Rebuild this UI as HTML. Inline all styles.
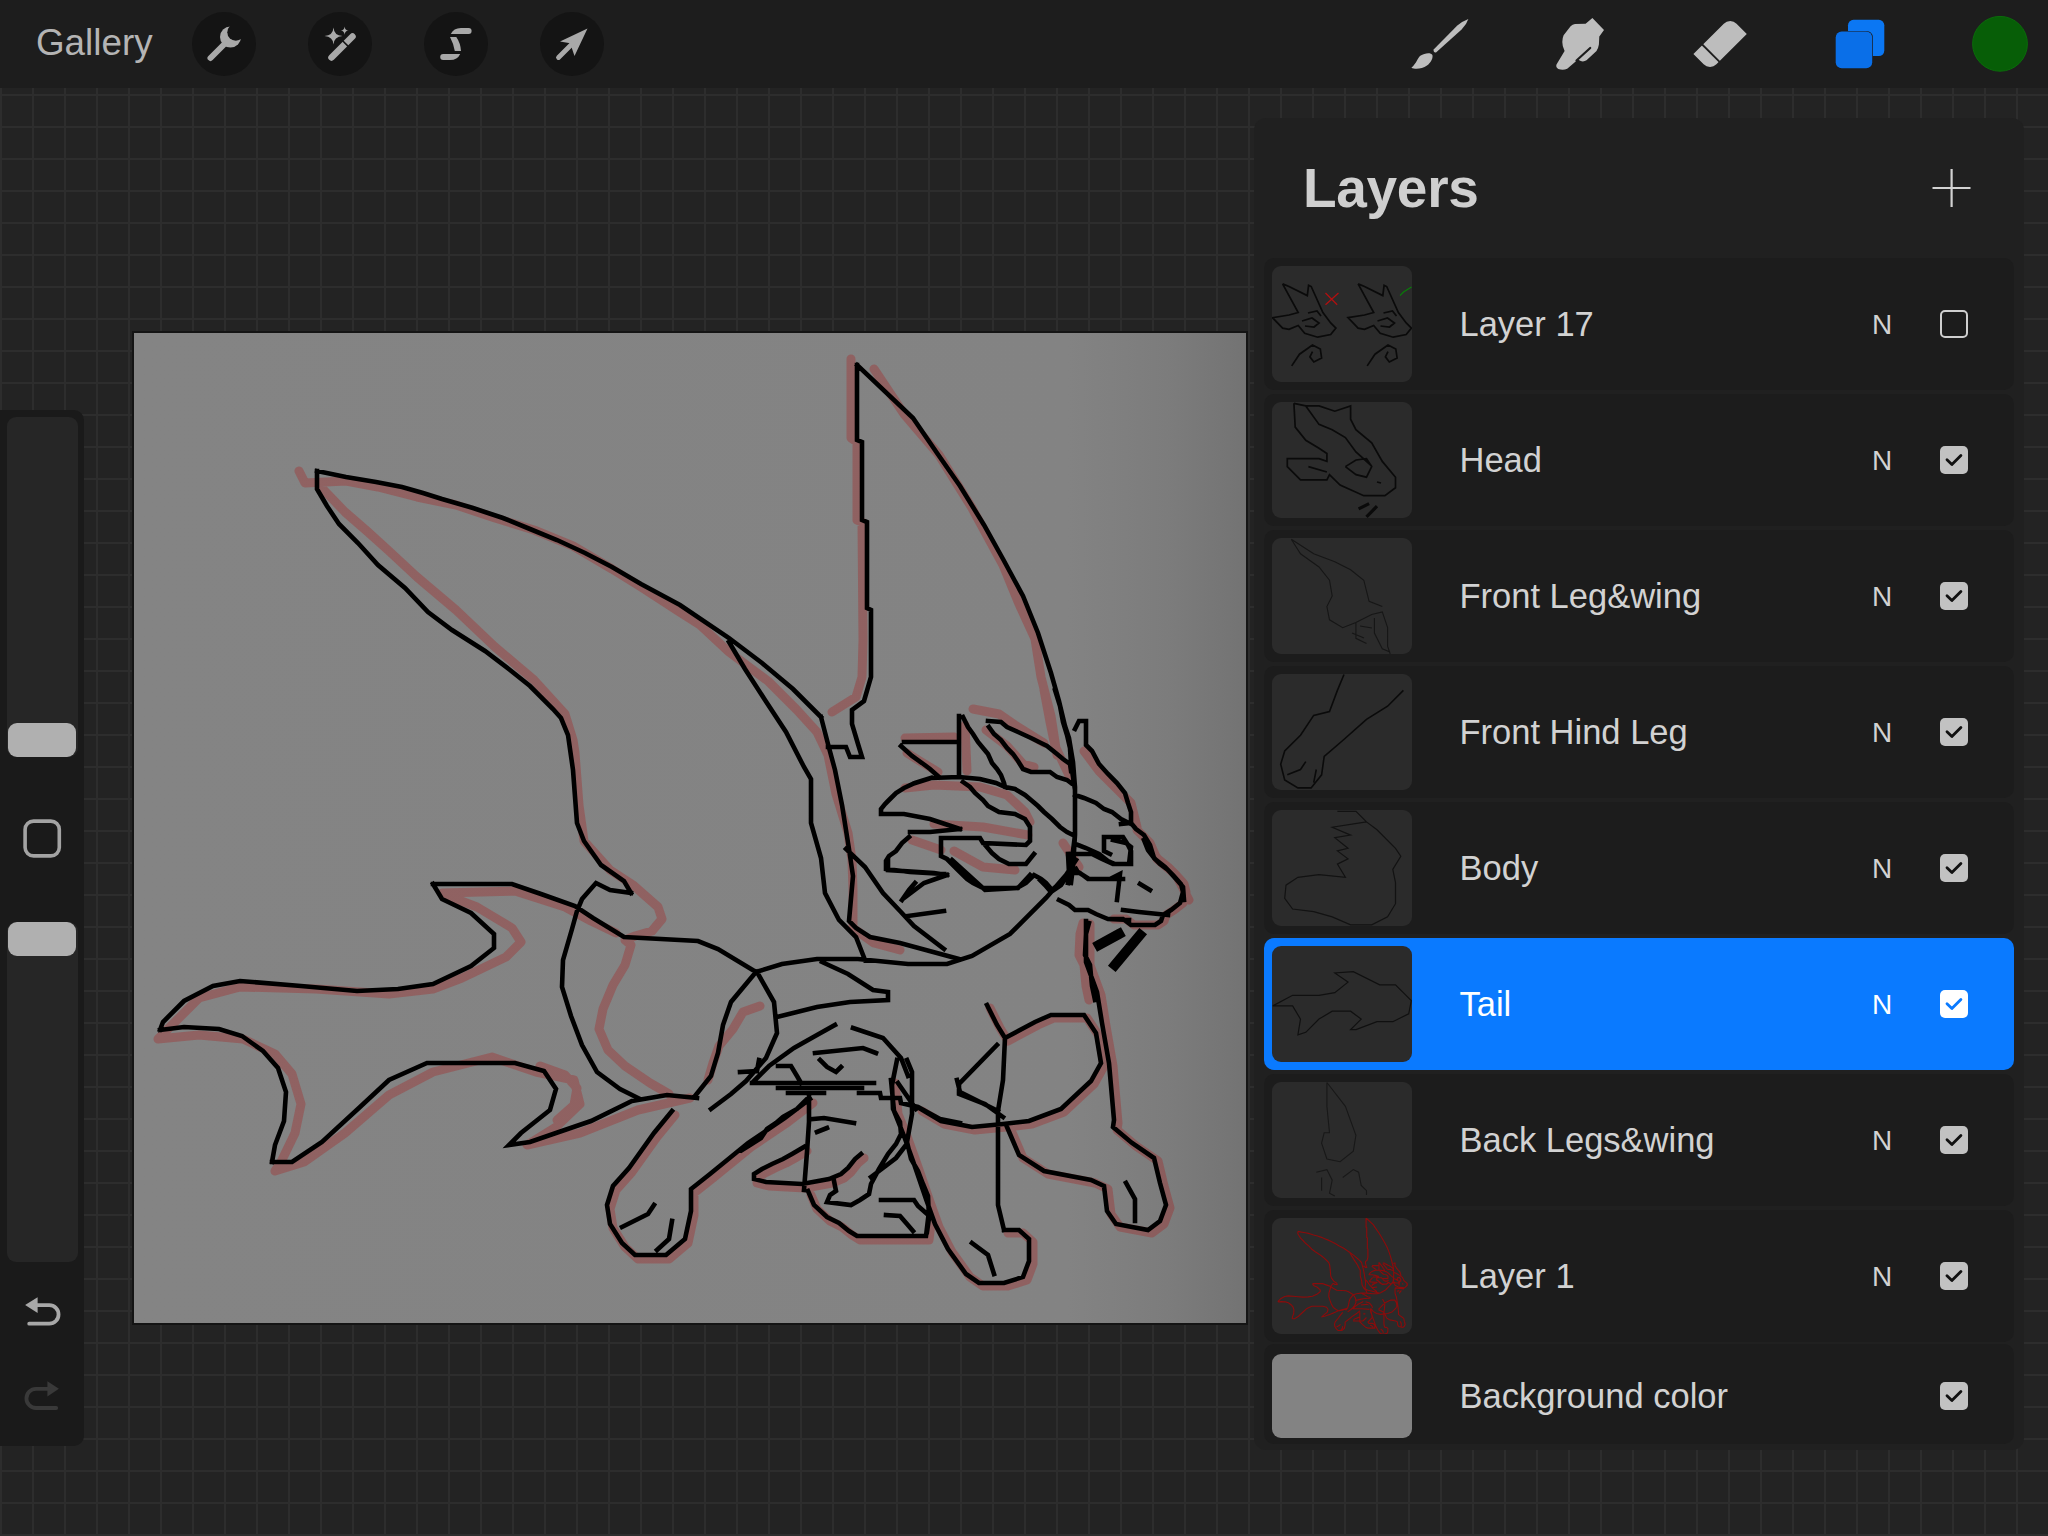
<!DOCTYPE html>
<html><head><meta charset="utf-8">
<style>
*{margin:0;padding:0;box-sizing:border-box}
html,body{width:2048px;height:1536px;overflow:hidden}
body{position:relative;font-family:"Liberation Sans",sans-serif;background-color:#232323;
background-image:linear-gradient(to right,#2d2d2d 0,#2d2d2d 2px,transparent 2px),linear-gradient(to bottom,#2d2d2d 0,#2d2d2d 2px,transparent 2px);
background-size:32px 32px;background-position:32px 94px}
.abs{position:absolute}
#top{left:0;top:0;width:2048px;height:88px;background:#1d1d1d}
#gallery{left:36px;top:22px;font-size:36.8px;color:#b4b4b4;line-height:42px;white-space:nowrap}
.tb{width:64px;height:64px;border-radius:50%;background:#141414;top:12px}
#side{left:0;top:410px;width:84px;height:1036px;background:#1a1a1a;border-radius:0 10px 10px 0}
.track{left:7px;width:71px;background:#262626;border-radius:9px}
.handle{left:8px;width:68px;height:34px;background:#b0b0b0;border-radius:9px}
#canvas{left:134px;top:333px;width:1112px;height:990px;background:linear-gradient(to right,#848484 0%,#838383 84%,#7c7c7c 93%,#737373 100%);box-shadow:0 0 0 2px #141414}
#panel{left:1254px;top:118px;width:770px;height:1332px;background:#202020;border-radius:12px}
#ltitle{left:1303px;top:155.5px;font-size:55px;font-weight:700;color:#cfcfcf;line-height:64px;letter-spacing:-0.3px}
.row{left:1264px;width:750px;height:132px;background:#1c1c1c;border-radius:10px}
.row.sel{background:#0a7aff}
.thumb{left:8px;top:8px;width:140px;height:116px;background:#2b2b2b;border-radius:9px;overflow:hidden}
.name{left:195.5px;top:47px;font-size:34.5px;color:#d2d2d2;line-height:38px;white-space:nowrap}
.bm{left:608px;top:51px;font-size:28px;color:#d2d2d2;line-height:32px}
.cb{left:676px;top:52px;width:28px;height:28px;border-radius:5px;background:#c2c2c2}
.cb.off{background:transparent;border:2.2px solid #cfcfcf}
.cb svg{position:absolute;left:0;top:0}
.sel .name,.sel .bm{color:#ffffff}
.sel .cb{background:#ffffff}
</style></head><body>
<div id="top" class="abs"></div>
<div id="gallery" class="abs">Gallery</div>
<div class="abs tb" style="left:192px"></div>
<div class="abs tb" style="left:308px"></div>
<div class="abs tb" style="left:424px"></div>
<div class="abs tb" style="left:540px"></div>
<svg class="abs" style="left:0;top:0" width="2048" height="88" viewBox="0 0 2048 88">
<defs><mask id="wm"><rect x="0" y="0" width="70" height="70" fill="#fff"/><circle cx="45.8" cy="22.2" r="8.5" fill="#000"/></mask></defs>
<g transform="translate(190,10)" fill="#a9a9a9" stroke="none">
<line x1="20.5" y1="48" x2="36" y2="32.5" stroke="#a9a9a9" stroke-width="6" stroke-linecap="round"/>
<circle cx="40.5" cy="27" r="10.5" mask="url(#wm)"/>
</g>
<g transform="translate(305,10)" fill="#a9a9a9">
<line x1="26.5" y1="47.5" x2="47.5" y2="26.5" stroke="#a9a9a9" stroke-width="6.5" stroke-linecap="round"/>
<line x1="37.6" y1="30.8" x2="43.2" y2="36.4" stroke="#141414" stroke-width="1.6"/>
<path d="M28.5,17.5 Q29,25.5 37.5,26 Q29,26.5 28.5,34.5 Q28,26.5 19.5,26 Q28,25.5 28.5,17.5 Z"/>
<path d="M39.6,16.5 Q39.9,20.3 43.6,20.6 Q39.9,20.9 39.6,24.7 Q39.3,20.9 35.6,20.6 Q39.3,20.3 39.6,16.5 Z"/>
</g>
<g transform="translate(421,10)" fill="#a9a9a9">
<path d="M29.8,24 Q32.5,18 40,18 L47.6,18 A3,3 0 0 1 47.6,24 Z"/>
<path d="M29,27 L35.3,27 Q39.5,33 40,41 L33.8,41 Q32.5,33.5 29,27 Z"/>
<path d="M39.2,44 Q36.5,50 29,50 L22.2,50 A3,3 0 0 1 22.2,44 Z"/>
</g>
<g transform="translate(537,10)" fill="#a9a9a9">
<path d="M50.5,18.5 L23,31.5 L33.2,33.2 L37.5,46 Z"/>
<line x1="21.5" y1="47.5" x2="36" y2="33" stroke="#a9a9a9" stroke-width="4.8" stroke-linecap="round"/>
</g>
<g transform="translate(1400,10)" fill="#bdbdbd">
<path d="M68.4,9 Q63,11 57.3,15.4 L33.4,39.8 Q33.6,43 36,42.4 L61.6,19.4 Q66.5,14.5 68.4,9 Z"/>
<path d="M32.4,45 C31,42.3 25,42.6 20.3,45.8 C17.4,48 17,53 11.4,57.7 C15,59.6 22,59 27,55.6 C31,52.6 33.2,48 32.4,45 Z"/>
</g>
<g transform="translate(1540,10)" fill="#bdbdbd">
<path d="M52.4,8 L64,20 L59.3,26.4 L58.9,34.6 Q58.3,38.5 56.5,41 L46.5,50.3 Q43.5,52.2 40.2,50.8 L38,49.5 L27.2,58.8 Q23,60.6 18.3,59 Q15.5,57.2 16.5,54.5 L24.6,41 Q22.2,36 22.3,31.9 Q22.4,28 23.6,25.3 L30.6,16.2 Q32.5,14.2 35,14 L45.6,13.7 Z"/>
<line x1="50.2" y1="38" x2="36.5" y2="50.5" stroke="#1d1d1d" stroke-width="2.2" stroke-linecap="round"/>
</g>
<g transform="translate(1720.1,44) rotate(-45)" fill="#bdbdbd">
<path d="M-26,-11.75 L17,-11.75 A9,9 0 0 1 26,-2.75 L26,11.75 L-17,11.75 A9,9 0 0 1 -26,2.75 Z"/>
<line x1="-13" y1="-13" x2="-13" y2="13" stroke="#1d1d1d" stroke-width="1.8"/>
</g>
<g transform="translate(1820,10)">
<rect x="28" y="9.8" width="36.3" height="36.2" rx="5.5" fill="#0b77f3"/>
<rect x="15" y="20.9" width="37.9" height="38.1" rx="6.5" fill="#1d1d1d"/>
<rect x="15.7" y="21.6" width="36.5" height="36.7" rx="6" fill="#0a6fe8"/>
</g>
<circle cx="2000" cy="43.8" r="27.4" fill="#075e07" stroke="#0a6c0a" stroke-width="1"/>
</svg>

<div id="side" class="abs">
  <div class="abs track" style="top:7px;height:340px"></div>
  <div class="abs handle" style="top:313px"></div>
  <div class="abs track" style="top:512px;height:340px"></div>
  <div class="abs handle" style="top:512px"></div>
</div>
<svg class="abs" style="left:0;top:780px" width="84" height="660" viewBox="0 780 84 660">
<rect x="25.1" y="821.1" width="34.2" height="34.8" rx="8.5" fill="none" stroke="#a3a3a3" stroke-width="3.6"/>
<path d="M25.1,1305 L37.6,1297.2 L37.6,1313 Z" fill="#a8a8a8"/>
<path d="M36,1305.2 L49.3,1305.2 A9.25,9.25 0 0 1 49.3,1323.7 L29.2,1323.7" fill="none" stroke="#a8a8a8" stroke-width="3.8" stroke-linecap="round"/>
<path d="M58.9,1388.8 L47.4,1381.2 L47.4,1396.6 Z" fill="#393939"/>
<path d="M48.5,1388.8 L36,1388.8 A9.6,9.6 0 0 0 36,1408 L56.2,1408" fill="none" stroke="#393939" stroke-width="3.8" stroke-linecap="round"/>
</svg>

<div id="canvas" class="abs"></div>
<!--CANVAS--><svg class="abs" style="left:134px;top:333px" width="1112" height="990" viewBox="0 0 1112 990"><path d="M165,138 L171,150 L212,148 L244,154 L283,164 L322,172 L361,185 L400,197 L439,213 L478,236 L507,254 L544,278 L566,292 L595,319 L634,348 L663,377 L683,399 L694,422 L702,461 L714,500 L718,527 L719,557 L719,595 L740,610 L766,617 M188,155 L211,179 L234,199 L255,218 L283,244 L322,277 L361,314 L400,347 L431,381 L439,407 L441,420 L445,472 L450,508 L476,537 L499,552 L524,574 L528,586 L518,598 L501,603 L491,607 L497,612 L491,632 L479,652 L469,676 L465,696 L474,717 L491,733 L516,750 L535,761 M717,26 L717,105 L723,109 L723,187 L728,189 L729,307 L728,344 L722,364 L698,379 M740,36 L770,81 L805,122 L838,175 L869,232 L885,271 L901,306 L907,344 L917,383 L923,422 M308,560 L381,558 L431,574 L457,588 L482,600 M314,563 L343,574 L378,595 L387,609 L372,624 L328,645 L299,656 L255,661 L182,656 L106,654 L65,665 L41,689 L24,706 M24,706 L65,702 L109,706 L141,721 L158,741 L167,771 L161,800 L147,829 L141,838 M141,838 L170,829 L211,800 L255,762 L299,739 L358,724 L402,739 L440,747 L446,771 L422,794 L393,812 L446,800 L504,777 L556,765 M406,733 L431,742 L443,755 L440,772 L423,787 M626,673 L609,679 L599,696 L585,713 L579,730 L574,747 M839,376 L865,381 L881,392 L897,402 L910,410 M910,357 L916,389 L921,413 L933,438 L937,447 M771,405 L820,404 M773,420 L789,430 L804,439 M831,392 L833,438 M852,397 L873,413 L889,431 L900,434 M771,455 L800,452 L846,454 L873,462 L891,479 L896,489 M800,491 L849,494 L894,502 M778,507 L807,517 M820,518 L849,534 L881,537 M950,418 L965,438 L984,457 L997,470 L1003,494 M1003,497 L1016,510 L1023,526 L1042,542 L1055,567 M929,510 L945,534 M788,778 L810,791 L841,797 L872,794 L898,791 L930,779 L960,751 L970,733 L965,703 L953,685 L920,685 L904,692 L874,708 L866,695 L856,675 M956,591 L956,632 L967,662 L972,693 L979,733 L984,790 L983,797 L1002,813 L1024,828 L1030,853 L1036,875 L1030,891 L1018,900 L986,894 L977,881 L974,856 L961,850 L914,841 L889,825 L877,797 M541,782 L523,804 L498,839 L482,857 L476,876 L479,895 L491,914 L504,926 L535,926 L554,910 L560,882 L560,860 L579,845 L617,814 L654,789 L679,770 M673,818 L661,825 L652,830 L641,835 L631,840 L623,845 L623,850 L635,853 L671,855 L698,850 L710,845 L717,839 L724,830 L730,825 M677,862 L683,876 L696,888 L708,894 L718,902 L726,907 L795,907 L798,882 M761,750 L764,781 L774,806 L783,831 L796,869 L805,894 L818,919 L836,944 L849,953 L874,953 L893,947 L899,931 L899,909 L889,900 L874,900 M1013,507 L1017,517 L1024,526 L1034,534 L1042,542 L1050,551 L1052,559 L1049,570 L1040,577 L1032,582 L1030,588 L1024,592 L1000,592 L992,586 L980,586 M949,590 L946,601 L945,622 L950,632 L952,653 L955,667" fill="none" stroke="#b00808" stroke-opacity="0.27" stroke-width="9" stroke-linejoin="round" stroke-linecap="round"/><path d="M183,138 L212,144 L242,149 L268,154 L289,160 L308,166 L339,175 L369,185 L396,196 L423,207 L451,220 L478,234 L507,251 L546,272 L595,305 L628,330 L659,356 L687,384 M687,384 L694,411 L701,437 L708,472 L715,516 L719,543 L715,588 L722,595 L736,604 L766,610 L825,626 M183,138 L183,156 L193,173 L205,191 L224,210 L244,232 L271,255 L294,279 L318,297 L351,318 L376,337 L396,353 L419,376 L427,385 L434,402 L439,437 L443,490 L450,508 L467,532 L490,548 L497,560 M723,32 L723,107 L728,109 L728,187 L733,189 L733,275 L737,277 L737,344 L730,368 L718,377 L718,391 L724,411 L728,424 L716,424 L712,414 L694,414 M723,32 L779,85 L803,120 L826,153 L850,192 L869,226 L889,263 L904,300 L917,340 L925,368 L931,393 L935,405 L939,429 L941,454 L941,502 L939,534 L937,550 M595,309 L611,336 L631,367 L652,399 L670,434 L677,446 L677,490 L687,525 L691,560 L705,587 L722,604 L731,627 M712,516 L731,534 L749,560 L766,578 L780,593 L810,616 M299,551 L378,551 L407,561 L441,573 L459,585 L490,604 L564,608 L584,616 L622,639 M299,551 L308,566 L337,580 L360,601 L360,615 L337,633 L299,651 L264,656 L223,658 L167,653 L106,648 L79,653 L50,668 L29,689 L26,697 M26,697 L50,694 L85,696 L108,703 L129,718 L144,735 L152,759 L150,788 L141,812 L138,829 M138,829 L158,829 L188,809 L226,774 L255,747 L293,730 L381,730 L410,738 L422,756 L416,777 L387,800 L375,812 L396,809 L422,800 L457,788 L498,768 L533,762 L563,765 M497,560 L476,557 L462,550 L448,566 L443,578 L438,596 L429,627 L428,654 L437,683 L448,712 L463,739 L486,756 L504,765 M622,639 L597,669 L589,692 L584,720 L577,743 L561,763 M623,639 L640,669 L643,700 L632,725 L612,748 L597,761 L577,776 M622,639 L648,631 L683,626 L724,626 L774,631 L813,631 L838,623 L876,601 L912,565 L932,542 L942,527 M643,684 L683,674 L716,669 L754,667 L754,659 L739,657 L714,641 L688,629 M785,775 L807,788 L838,794 L869,791 L895,788 L927,776 L957,748 L967,730 L962,700 L950,682 L917,682 L901,689 L871,705 L863,692 L853,672 M871,705 L869,747 L864,778 L864,872 L870,897 M863,712 L825,751 L825,761 L851,771 L869,784 M952,588 L952,629 L963,659 L968,690 L975,730 L980,787 L979,794 L998,810 L1020,825 L1026,850 L1032,872 L1026,888 L1014,897 L982,891 L973,878 L970,853 L957,847 L910,838 L885,822 L873,794 M992,850 L1001,866 L1001,888 M538,778 L520,800 L495,835 L479,853 L473,872 L476,891 L488,910 L501,922 L532,922 L551,906 L557,878 L557,856 L576,841 L614,810 L651,785 L676,766 M520,872 L514,881 L488,894 M538,888 L535,906 L523,917 M618,750 L740,750 M644,755 L728,755 M654,760 L690,760 M725,760 L746,760 L747,765 L766,765 L767,770 L784,774 L795,780 L806,786 L826,790 M606,739 L623,738 L625,727 M644,733 L657,733 L663,743 L667,750 M686,727 L693,734 L702,739 L707,734 M675,764 L663,776 L649,784 L642,790 L633,796 L627,805 L616,812 L608,817 M679,786 L690,785 L720,790 M675,764 L675,789 L673,819 L670,857 M683,799 L693,795 M670,814 L658,821 L649,826 L638,831 L628,836 L620,841 L620,846 L632,849 L668,851 L695,846 L707,841 L714,835 L721,826 L727,821 M700,848 L702,858 L696,862 L693,869 L717,872 L726,867 L735,861 L737,851 L745,836 L754,821 L762,811 L767,801 L766,789 L759,776 L758,752 L763,727 M737,844 L749,835 L762,825 L772,812 M674,858 L680,872 L693,884 L705,890 L715,898 L723,903 L792,903 L795,878 M747,867 L780,867 L784,873 L792,880 M752,882 L766,883 L773,891 L779,898 M773,727 L778,739 L778,781 L773,809 L777,826 L784,838 L789,851 L794,863 L795,885 L793,899 M757,747 L760,778 L770,803 L779,828 L792,866 L801,891 L814,916 L832,941 L845,950 L870,950 L889,944 L895,928 L895,906 L885,897 L870,897 M838,910 L854,922 L860,941 M823,747 L826,759 L864,778 M770,409 L825,409 M767,413 L778,423 L788,430 L796,436 L805,444 M825,383 L825,442 M829,384 L834,394 L839,401 L844,409 L849,415 L854,421 L858,430 L863,436 L867,442 L870,450 L871,454 L881,456 L891,462 L897,467 L904,473 L910,479 L918,486 L926,494 L933,499 L939,502 M854,388 L867,389 L873,394 L884,399 L897,405 L907,410 L913,413 L923,421 L929,426 L936,431 L937,438 M855,394 L860,401 L867,407 L873,415 L879,421 L884,428 L889,436 L897,439 L916,439 L923,444 L933,447 L937,450 M921,357 L926,373 L929,389 L933,402 L936,415 L937,431 L939,444 L941,457 L941,470 L941,502 L939,518 L937,534 L934,550 M941,396 L945,388 L952,388 L952,412 L958,418 L965,431 L974,441 L983,450 L991,460 L994,470 L997,479 L997,490 L987,491 M997,490 L1002,496 L1010,502 L1016,512 L1020,525 L1026,531 L1034,537 L1042,546 L1049,554 L1050,567 M941,462 L950,465 L962,470 L970,476 L978,479 L987,486 L997,491 M781,450 L797,445 L825,444 L846,446 L862,450 L871,454 M797,445 L781,450 L770,455 L762,460 L755,467 L751,471 L747,476 L747,481 L770,481 L796,486 L826,496 M776,499 L796,499 L826,496 M807,505 L846,505 L849,510 L892,512 L896,508 L896,494 L891,486 L881,481 L865,479 L854,473 L849,467 L841,460 L836,454 L829,449 M852,513 L858,520 L865,526 L875,531 L892,531 L900,521 M775,504 L768,510 L762,518 L755,523 L752,528 L752,536 L776,539 L810,541 M807,505 L807,523 L813,526 L823,536 L833,546 L839,550 L849,555 L883,555 L892,550 L900,542 L907,546 L912,550 L918,557 L926,550 L933,544 L937,539 L942,536 M781,550 L775,557 L768,567 M970,504 L989,504 L994,512 L997,518 L997,531 L981,531 L974,528 L965,521 L952,515 L944,512 M970,504 L970,518 L976,521 M944,539 L955,546 L976,546 L986,541 L983,567 M754,527 L754,537 L800,540 L813,542 M770,565 L790,550 L813,542 M774,583 L810,578 M818,527 L851,557 L884,555 L896,542 M701,692 L683,702 L660,715 L635,733 L620,748 M719,695 L749,705 L767,725 L774,743 M681,720 L729,715 L742,720 M764,750 L782,776 M1010,507 L1014,517 L1021,526 L1031,534 L1039,542 L1047,551 L1049,559 L1046,570 L1037,577 L1029,582 L1027,588 L1021,592 L997,592 L989,586 L977,586 M1006,551 L1016,557 M925,567 L935,572 L941,577 L954,577 L962,581 L974,586 L995,587 M989,577 L1005,579 L1034,582 M934,521 L958,521 L968,526 L979,531 L995,531 L997,514 L992,510 L979,507 M934,521 L935,540 L946,540 L954,546 L989,546 M906,547 L911,552 L917,559 L927,552 L931,546 M955,590 L952,601 L951,622 L956,632 L958,653 L961,667" fill="none" stroke="#000" stroke-width="4.6" stroke-linejoin="miter" stroke-linecap="square"/><path d="M965,612 L985,601 M981,632 L1006,602" stroke="#000" stroke-width="10" stroke-linecap="square"/></svg><!--/CANVAS-->

<div id="panel" class="abs"></div>
<div id="ltitle" class="abs">Layers</div>
<svg class="abs" style="left:1931px;top:168px" width="42" height="42" viewBox="0 0 42 42"><path d="M20.6,1 L20.6,39 M1.5,20 L39.5,20" stroke="#d2d2d2" stroke-width="2.2"/></svg>

<div class="abs row" style="top:258px"><div class="abs thumb"><svg width="140" height="116" viewBox="0 0 140 116"><!--Tl17--><path d="M10.6,17.9 L17,20.5 L35.3,29.6 L36.6,19.2 L39.2,20.5 L50.9,46.5 L58.7,56.9 L63.9,62.1 L58.7,68.6 L45.7,71.2 L32.7,67.3 L26.2,59.5 L17,63.4 L10.6,62.1 L0.5,51.7 L17,49 L26.2,46.5 L10.6,17.9 M30,55 L40,52 L47,57 L42,61 L33,60 M36,47 L45,45 L49,50 M19.7,99.9 L27.5,88.2 L40.5,79 L48.3,83 L49.6,92 L41.8,96 L37.9,90.8 L40.5,85.6 M86.1,17.9 L92.5,20.5 L110.8,29.6 L112.1,19.2 L114.7,20.5 L126.4,46.5 L134.2,56.9 L139.4,62.1 L134.2,68.6 L121.2,71.2 L108.2,67.3 L101.7,59.5 L92.5,63.4 L86.1,62.1 L76.0,51.7 L92.5,49 L101.7,46.5 L86.1,17.9 M105.5,55 L115.5,52 L122.5,57 L117.5,61 L108.5,60 M111.5,47 L120.5,45 L124.5,50 M95.2,99.9 L103.0,88.2 L116.0,79 L123.8,83 L125.1,92 L117.3,96 L113.4,90.8 L116.0,85.6" fill="none" stroke="#0a0a0a" stroke-width="1.7"/><path d="M53.5,27 L65.2,38.7 M53.5,38.7 L66.5,27" stroke="#b01010" stroke-width="1.3"/><path d="M128,29.6 L131.5,26 L139.5,21" stroke="#0a7a0a" stroke-width="1.3" fill="none"/><!--/Tl17--></svg></div><div class="abs name">Layer 17</div><div class="abs bm">N</div><div class="abs cb off"></div></div>
<div class="abs row" style="top:394px"><div class="abs thumb"><svg width="140" height="116" viewBox="0 0 140 116"><!--Thead--><path d="M21.9,1.3 L23.2,25.1 L33.8,38.3 L47,46.2 L54.9,51.5 L54.9,59.4 L47,56.7 L15.3,56.7 L15.3,64.6 L28.5,77.8 L54.9,77.8 L57.5,72.6 L68.1,83.1 L91.8,93.7 L112.9,93.7 L123.5,85.8 L123.5,75.2 L110.3,59.4 L99.7,40.9 L83.9,27.7 L78.6,17.2 L78.6,3.9 L62.8,9.2 L47,3.9 L33.8,3.9 L21.9,1.3 M33.8,3.9 L47,22.4 L60.2,27.7 L73.4,35.6 L83.9,50 L99.7,64 M73.4,64.6 L84,72.6 L94.5,75.2 L99.7,64.6 L94.5,56.7 L84,58 L73.4,64.6 M36.4,64.6 L54.9,70 M105,80 L109,81" fill="none" stroke="#0a0a0a" stroke-width="1.7"/><path d="M86.6,106.9 L97.1,101.6 M94.5,114.8 L105,104.2" stroke="#0a0a0a" stroke-width="3.2"/><!--/Thead--></svg></div><div class="abs name">Head</div><div class="abs bm">N</div><div class="abs cb"><svg width="28" height="28" viewBox="0 0 28 28"><path d="M7,13.8 L11.9,18.6 L20.9,9.5" fill="none" stroke="#111" stroke-width="2.8" stroke-linecap="round" stroke-linejoin="round"/></svg></div></div>
<div class="abs row" style="top:530px"><div class="abs thumb"><svg width="140" height="116" viewBox="0 0 140 116"><!--Tflw--><path d="M19.3,1.3 L41.7,15.8 L62.8,23.7 L78.6,31.7 L91.8,42.2 L97.1,63.3 L110.3,68.6 M19.3,1.3 L28.5,15.8 L47,29 L57.5,42.2 L60.2,58 L54.9,68.6 L57.5,81.8 L70.7,89.7 L83.9,84.4 L99.7,76.5 L110.3,73.9 L115.6,89.7 L115.6,108.2 L118.2,116 M102.4,80 L102.4,95 L110.3,110.8 L118,114 M83.9,84.4 L83.9,100.3 L94.5,105.5 M88,88 L100,90 M80,95 L92,100" fill="none" stroke="#161616" stroke-width="1.1"/><!--/Tflw--></svg></div><div class="abs name">Front Leg&amp;wing</div><div class="abs bm">N</div><div class="abs cb"><svg width="28" height="28" viewBox="0 0 28 28"><path d="M7,13.8 L11.9,18.6 L20.9,9.5" fill="none" stroke="#111" stroke-width="2.8" stroke-linecap="round" stroke-linejoin="round"/></svg></div></div>
<div class="abs row" style="top:666px"><div class="abs thumb"><svg width="140" height="116" viewBox="0 0 140 116"><!--Tfhl--><path d="M72,0.5 L65.4,16.4 L57.5,37.5 L41.7,41.4 L28.5,61.2 L12.7,77 L8.7,90.2 L12.7,106 L25.9,113.9 L39.1,113.9 L49.6,100.8 L52.2,82.3 L70.7,66.5 L94.5,45.4 L115.6,32.2 L131.4,16.4 M33.8,87.6 L28.5,95.5 L15.3,100.8 M44.3,95.5 L41.7,108.7" fill="none" stroke="#0a0a0a" stroke-width="1.6"/><!--/Tfhl--></svg></div><div class="abs name">Front Hind Leg</div><div class="abs bm">N</div><div class="abs cb"><svg width="28" height="28" viewBox="0 0 28 28"><path d="M7,13.8 L11.9,18.6 L20.9,9.5" fill="none" stroke="#111" stroke-width="2.8" stroke-linecap="round" stroke-linejoin="round"/></svg></div></div>
<div class="abs row" style="top:802px"><div class="abs thumb"><svg width="140" height="116" viewBox="0 0 140 116"><!--Tbody--><path d="M65.4,1.3 L84,1.3 L94.5,11.9 L105,19.8 L123.5,38.3 L128.8,46.2 L120.8,59.4 L123.5,72.6 L123.5,93.7 L115.6,106.9 L99.7,114.8 L78.6,114.8 L60.2,106.9 L41.7,101.6 L20.6,99 L12.7,88.4 L14,75.2 L25.9,67.3 L47,64.6 L73.4,67.3 L65.4,54.1 L76,48.8 L65.4,40.9 L76,38.3 L62.8,27.7 L78.6,25.1 L60.2,17.2 L94.5,11.9" fill="none" stroke="#121212" stroke-width="1.2"/><!--/Tbody--></svg></div><div class="abs name">Body</div><div class="abs bm">N</div><div class="abs cb"><svg width="28" height="28" viewBox="0 0 28 28"><path d="M7,13.8 L11.9,18.6 L20.9,9.5" fill="none" stroke="#111" stroke-width="2.8" stroke-linecap="round" stroke-linejoin="round"/></svg></div></div>
<div class="abs row sel" style="top:938px"><div class="abs thumb"><svg width="140" height="116" viewBox="0 0 140 116"><!--Ttail--><path d="M0.8,59.9 L20.6,49.3 L47,49.3 L62.8,46.7 L76,36.1 L62.8,26.9 L81.3,25.6 L107.7,38.8 L123.5,38.8 L139.3,54.6 L136.7,67.8 L120.8,75.7 L105,75.7 L84,83.6 L78.6,83.6 L89.2,73.1 L78.6,65.2 L60.2,65.2 L47,73.1 L33.8,86.3 L25.9,88.9 L28.5,73.1 L20.6,59.9 L0.8,59.9" fill="none" stroke="#101010" stroke-width="1.2"/><!--/Ttail--></svg></div><div class="abs name">Tail</div><div class="abs bm">N</div><div class="abs cb"><svg width="28" height="28" viewBox="0 0 28 28"><path d="M7,13.8 L11.9,18.6 L20.9,9.5" fill="none" stroke="#0a7aff" stroke-width="2.8" stroke-linecap="round" stroke-linejoin="round"/></svg></div></div>
<div class="abs row" style="top:1074px"><div class="abs thumb"><svg width="140" height="116" viewBox="0 0 140 116"><!--Tblw--><path d="M54.9,0.5 L73.4,24.3 L83.9,53.3 L81.3,69.1 L68.1,79.7 L54.9,77 L49.6,61.2 L52.2,50.7 L57.5,50.7 L54.9,24.3 L54.9,0.5 M44.3,90.2 L54.9,87.6 L60.2,98.2 L57.5,111.3 L62.8,113.9 M49.6,95.5 L49.6,108.7 M70.7,95.5 L81.3,87.6 L86.6,90.2 L89.2,103.4 L94.5,108.7 L94.5,113" fill="none" stroke="#181818" stroke-width="1.1"/><!--/Tblw--></svg></div><div class="abs name">Back Legs&amp;wing</div><div class="abs bm">N</div><div class="abs cb"><svg width="28" height="28" viewBox="0 0 28 28"><path d="M7,13.8 L11.9,18.6 L20.9,9.5" fill="none" stroke="#111" stroke-width="2.8" stroke-linecap="round" stroke-linejoin="round"/></svg></div></div>
<div class="abs row" style="top:1210px"><div class="abs thumb"><svg width="140" height="116" viewBox="0 0 140 116"><!--Tl1--><g transform="translate(6,0) scale(0.1264) translate(-160,-365)"><path d="M317,471 L346,477 L376,482 L402,487 L423,493 L442,499 L473,508 L503,518 L530,529 L557,540 L585,553 L612,567 L641,584 L680,605 L729,638 L762,663 L793,689 L821,717 M821,717 L828,744 L835,770 L842,805 L849,849 L853,876 L849,921 L856,928 L870,937 L900,943 L959,959 M317,471 L317,489 L327,506 L339,524 L358,543 L378,565 L405,588 L428,612 L452,630 L485,651 L510,670 L530,686 L553,709 L561,718 L568,735 L573,770 L577,823 L584,841 L601,865 L624,881 L631,893 M857,365 L857,440 L862,442 L862,520 L867,522 L867,608 L871,610 L871,677 L864,701 L852,710 L852,724 L858,744 L862,757 L850,757 L846,747 L828,747 M857,365 L913,418 L937,453 L960,486 L984,525 L1003,559 L1023,596 L1038,633 L1051,673 L1059,701 L1065,726 L1069,738 L1073,762 L1075,787 L1075,835 L1073,867 L1071,883 M729,642 L745,669 L765,700 L786,732 L804,767 L811,779 L811,823 L821,858 L825,893 L839,920 L856,937 L865,960 M846,849 L865,867 L883,893 L900,911 L914,926 L944,949 M433,884 L512,884 L541,894 L575,906 L593,918 L624,937 L698,941 L718,949 L756,972 M433,884 L442,899 L471,913 L494,934 L494,948 L471,966 L433,984 L398,989 L357,991 L301,986 L240,981 L213,986 L184,1001 L163,1022 L160,1030 M160,1030 L184,1027 L219,1029 L242,1036 L263,1051 L278,1068 L286,1092 L284,1121 L275,1145 L272,1162 M272,1162 L292,1162 L322,1142 L360,1107 L389,1080 L427,1063 L515,1063 L544,1071 L556,1089 L550,1110 L521,1133 L509,1145 L530,1142 L556,1133 L591,1121 L632,1101 L667,1095 L707,1082 M631,893 L610,890 L596,883 L582,899 L577,911 L572,929 L563,960 L562,987 L571,1016 L582,1045 L597,1072 L620,1089 L638,1098 M756,972 L731,1002 L723,1025 L718,1053 L711,1076 L695,1096 M757,972 L774,1002 L777,1033 L766,1058 L746,1081 L731,1094 L711,1109 M756,972 L782,964 L817,959 L858,959 L908,964 L947,964 L972,956 L1010,934 L1046,898 L1066,875 L1076,860 M777,1017 L817,1007 L850,1002 L888,1000 L888,992 L873,990 L848,974 L822,962 M919,1108 L941,1121 L972,1127 L1003,1124 L1029,1121 L1061,1109 L1091,1081 L1101,1063 L1096,1033 L1084,1015 L1051,1015 L1035,1022 L1005,1038 L997,1025 L987,1005 M1005,1038 L1003,1080 L998,1111 L998,1205 L1004,1230 M997,1045 L959,1084 L959,1094 L985,1104 L1003,1117 M1086,921 L1086,962 L1097,992 L1102,1023 L1109,1063 L1114,1120 L1113,1127 L1132,1143 L1154,1158 L1160,1183 L1166,1205 L1160,1221 L1148,1230 L1116,1224 L1107,1211 L1104,1186 L1091,1180 L1044,1171 L1019,1155 L1007,1127 M1126,1183 L1135,1199 L1135,1221 M672,1111 L654,1133 L629,1168 L613,1186 L607,1205 L610,1224 L622,1243 L635,1255 L666,1255 L685,1239 L691,1211 L691,1189 L710,1174 L748,1143 L785,1118 L810,1099 M654,1205 L648,1214 L622,1227 M672,1221 L669,1239 L657,1250 M560,1133 L638,1099 L707,1080 M807,1111 L807,1186 L826,1205 L854,1230 L872,1236 L926,1236 L926,1211 L910,1199 L879,1199 L872,1189 L891,1168 L904,1155 L904,1143 L898,1111 L894,1080 M757,1174 L766,1164 L804,1149 M754,1180 L832,1180 L838,1174 L860,1152 M888,1214 L901,1218 L913,1230 M835,1124 L851,1124 M891,1080 L894,1111 L904,1136 L913,1161 L926,1199 L935,1224 L948,1249 L966,1274 L979,1283 L1004,1283 L1023,1277 L1029,1261 L1029,1239 L1019,1230 L1004,1230 M972,1243 L988,1255 L994,1274 M957,1080 L960,1092 L998,1111 M904,742 L959,742 M901,746 L912,756 L922,763 L930,769 L939,777 M959,716 L959,775 M963,717 L968,727 L973,734 L978,742 L983,748 L988,754 L992,763 L997,769 L1001,775 L1004,783 L1005,787 L1015,789 L1025,795 L1031,800 L1038,806 L1044,812 L1052,819 L1060,827 L1067,832 L1073,835 M988,721 L1001,722 L1007,727 L1018,732 L1031,738 L1041,743 L1047,746 L1057,754 L1063,759 L1070,764 L1071,771 M989,727 L994,734 L1001,740 L1007,748 L1013,754 L1018,761 L1023,769 L1031,772 L1050,772 L1057,777 L1067,780 L1071,783 M1055,690 L1060,706 L1063,722 L1067,735 L1070,748 L1071,764 L1073,777 L1075,790 L1075,803 L1075,835 L1073,851 L1071,867 L1068,883 M1075,729 L1079,721 L1086,721 L1086,745 L1092,751 L1099,764 L1108,774 L1117,783 L1125,793 L1128,803 L1131,812 L1131,823 L1121,824 M1131,823 L1136,829 L1144,835 L1150,845 L1154,858 L1160,864 L1168,870 L1176,879 L1183,887 L1184,900 M1075,795 L1084,798 L1096,803 L1104,809 L1112,812 L1121,819 L1131,824 M915,783 L931,778 L959,777 L980,779 L996,783 L1005,787 M931,778 L915,783 L904,788 L896,793 L889,800 L885,804 L881,809 L881,814 L904,814 L930,819 L960,829 M910,832 L930,832 L960,829 M941,838 L980,838 L983,843 L1026,845 L1030,841 L1030,827 L1025,819 L1015,814 L999,812 L988,806 L983,800 L975,793 L970,787 L963,782 M986,846 L992,853 L999,859 L1009,864 L1026,864 L1034,854 M909,837 L902,843 L896,851 L889,856 L886,861 L886,869 L910,872 L944,874 M941,838 L941,856 L947,859 L957,869 L967,879 L973,883 L983,888 L1017,888 L1026,883 L1034,875 L1041,879 L1046,883 L1052,890 L1060,883 L1067,877 L1071,872 L1076,869 M915,883 L909,890 L902,900 M1104,837 L1123,837 L1128,845 L1131,851 L1131,864 L1115,864 L1108,861 L1099,854 L1086,848 L1078,845 M1104,837 L1104,851 L1110,854 M1078,872 L1089,879 L1110,879 L1120,874 L1117,900 M1142,883 L1152,890 M1071,870 L1086,898 L1112,911 L1160,918 L1178,903 L1183,885 L1175,873 M1086,918 L1157,926 M888,860 L888,870 L934,873 L947,875 M904,898 L924,883 L947,875 M908,916 L944,911 M952,860 L985,890 L1018,888 L1030,875 M1101,944 L1120,940 M1118,962 L1136,938 M835,1025 L817,1035 L794,1048 L769,1066 L754,1081 M853,1028 L883,1038 L901,1058 L908,1076 M815,1053 L863,1048 L876,1053 M751,1083 L822,1083 L883,1088 M898,1083 L916,1109" fill="none" stroke="#8a0c0c" stroke-width="9"/></g><!--/Tl1--></svg></div><div class="abs name">Layer 1</div><div class="abs bm">N</div><div class="abs cb"><svg width="28" height="28" viewBox="0 0 28 28"><path d="M7,13.8 L11.9,18.6 L20.9,9.5" fill="none" stroke="#111" stroke-width="2.8" stroke-linecap="round" stroke-linejoin="round"/></svg></div></div>
<div class="abs row" style="top:1344px;height:100px"><div class="abs thumb" style="top:10px;height:84px;background:#838383"></div><div class="abs name" style="top:33px">Background color</div><div class="abs cb" style="top:38px"><svg width="28" height="28" viewBox="0 0 28 28"><path d="M7,13.8 L11.9,18.6 L20.9,9.5" fill="none" stroke="#111" stroke-width="2.8" stroke-linecap="round" stroke-linejoin="round"/></svg></div></div>

</body></html>
